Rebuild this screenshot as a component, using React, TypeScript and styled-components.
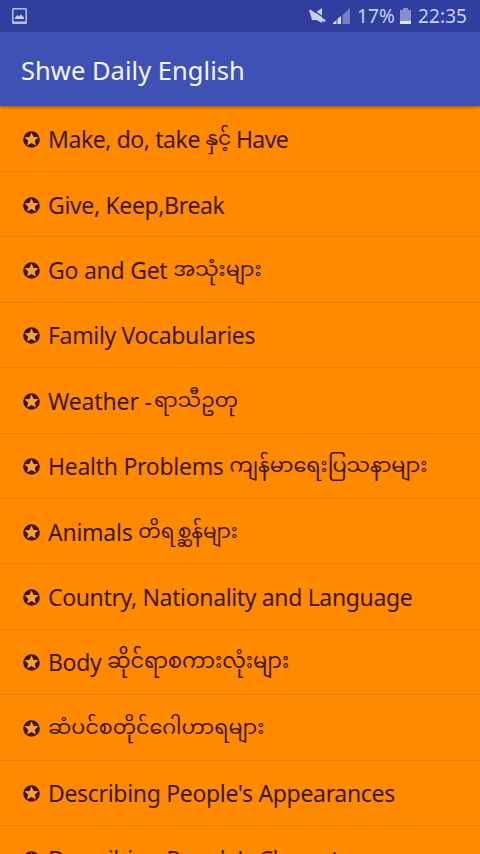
import styled, { createGlobalStyle } from 'styled-components';

const GlobalStyle = createGlobalStyle`
    * {
        box-sizing: border-box;
    }
    body {
        margin: 0;
        overflow: hidden;
        background: #ff8a00;
    }
`
const Screen = styled.main`
    width: 480px;
    height: 854px;
    overflow: hidden;
    display: flex;
    flex-direction: column;
    background: #ff8a00;
    font-family: "Noto Sans", "Open Sans", sans-serif;
`
const StatusBar = styled.div`
    flex: none;
    height: 32px;
    padding: 0 13px 0 12px;
    display: flex;
    align-items: center;
    background: #303f9f;
    color: #c9cff0;
`
const StatusIcons = styled.div`
    margin-left: auto;
    display: flex;
    align-items: center;
    gap: 7px;
`
const StatusText = styled.span<{ $width: number }>`
    width: ${(p) => p.$width}px;
    font-size: 19px;
    line-height: 32px;
    letter-spacing: 0.1px;
    white-space: nowrap;
`
const AppBar = styled.header`
    flex: none;
    position: relative;
    height: 74px;
    padding: 1px 21px 0;
    display: flex;
    align-items: center;
    background: #3f51b5;
    box-shadow: 0 1px 3px rgba(70, 30, 0, 0.55);
`
const Title = styled.h1`
    margin: 0;
    font-size: 25.5px;
    line-height: 34px;
    font-weight: 400;
    letter-spacing: 0.03px;
    color: #f3f5ff;
`
const List = styled.ul`
    flex: none;
    margin: 0;
    padding: 0.6px 0 0;
    list-style: none;
`
const Row = styled.li`
    height: 65.4px;
    padding: 1px 23px 0;
    display: flex;
    align-items: center;
    border-bottom: 1px solid #ea7f06;
    color: #3d1607;
`
const Star = styled.svg`
    flex: none;
    margin-top: 1px;
`
const Label = styled.div`
    margin-left: 8px;
    font-size: 23px;
    line-height: 32px;
    white-space: pre;
`
const Latin = styled.span<{ $spacing?: number }>`
    letter-spacing: ${(p) => p.$spacing ?? -0.35}px;
`
const Burmese = styled.span<{ $width: number; $size?: number }>`
    display: inline-block;
    width: ${(p) => p.$width}px;
    font-family: "Noto Sans Myanmar", "Padauk", "Noto Sans", sans-serif;
    font-size: ${(p) => p.$size ?? 20.7}px;
    line-height: 0;
    vertical-align: 3px;
`

type Part = { text: string; width?: number; size?: number; spacing?: number }

const topics: Part[][] = [
    [{ text: 'Make, do, take ', spacing: -0.42 }, { text: 'နှင့်', width: 25, size: 20 }, { text: ' Have', spacing: -0.6 }],
    [{ text: 'Give, Keep,Break' }],
    [{ text: 'Go and Get ', spacing: -0.25 }, { text: 'အသုံးများ', width: 88 }],
    [{ text: 'Family Vocabularies' }],
    [{ text: 'Weather ', spacing: -0.15 }, { text: '-', spacing: 2 }, { text: 'ရာသီဥတု', width: 84 }],
    [{ text: 'Health Problems ', spacing: -0.28 }, { text: 'ကျန်မာရေးပြသနာများ', width: 199, size: 20.8 }],
    [{ text: 'Animals ', spacing: -0.25 }, { text: 'တိရစ္ဆန်များ', width: 100, size: 20 }],
    [{ text: 'Country, Nationality and Language' }],
    [{ text: 'Body ' }, { text: 'ဆိုင်ရာစကားလုံးများ', width: 182, size: 20.9 }],
    [{ text: 'ဆံပင်စတိုင်ဂေါဟာရများ', width: 216 }],
    [{ text: "Describing People's Appearances", spacing: -0.32 }],
    [{ text: "Describing People's Characters", spacing: -0.32 }],
]

function StarBadge() {
    return (
        <Star width="17" height="17" viewBox="0 0 17 17">
            <circle cx="8.5" cy="8.5" r="8.3" fill="#3d1607" />
            <path d="M8.5 1.4 10.6 5.9 15.4 6.3 11.800 9.700 12.900 14.600 8.500 12 4.100 14.600 5.200 9.700 1.600 6.300 6.400 5.900Z" fill="#ffa030" />
        </Star>
    )
}

function PictureIcon() {
    return (
        <svg width="15" height="16" viewBox="0 0 15 16">
            <path d="M1.5 0h12A1.5 1.5 0 0 1 15 1.5v13a1.5 1.5 0 0 1-1.5 1.5h-12A1.5 1.5 0 0 1 0 14.5v-13A1.5 1.5 0 0 1 1.5 0zM1.5 1.5v12h12v-12z" fillRule="evenodd" fill="#b9c0ea" />
            <path d="M3 11V9.5L5.5 7 7 8.5 9 6.5 12 9.5V11z" fill="#c9cff0" />
        </svg>
    )
}

function MuteIcon() {
    return (
        <svg width="17" height="16" viewBox="0 0 17 16">
            <path d="M1 5h5L13 0v15L7.500 12H3z" fill="#c9cff0" />
            <path d="M1.500 0.500 17 11" stroke="#303f9f" strokeWidth="1.300" />
            <path d="M0.500 2.500 16 13.300" stroke="#c9cff0" strokeWidth="2.600" />
        </svg>
    )
}

function SignalIcon() {
    return (
        <svg width="17" height="16" viewBox="0 0 17 16">
            <path d="M9.5 16V7L17 0v16z" fill="#7680c4" />
            <path d="M0 16v-1l3.5-3v4zM4.5 16v-5L8 8v8z" fill="#d5daf5" />
        </svg>
    )
}

function BatteryIcon() {
    return (
        <svg width="11" height="16" viewBox="0 0 11 16">
            <path d="M3 0h5v2h3v14H0V2h3z" fill="#8790cb" />
            <path d="M0 13h11v3H0z" fill="#e3e6f9" />
        </svg>
    )
}

export default function App() {
    return (
        <Screen>
            <GlobalStyle />
            <StatusBar>
                <PictureIcon />
                <StatusIcons>
                    <MuteIcon />
                    <SignalIcon />
                    <StatusText $width={36}>17%</StatusText>
                    <BatteryIcon />
                    <StatusText $width={49}>22:35</StatusText>
                </StatusIcons>
            </StatusBar>
            <AppBar>
                <Title>Shwe Daily English</Title>
            </AppBar>
            <List>
                {topics.map((parts, i) => (
                    <Row key={i}>
                        <StarBadge />
                        <Label>
                            {parts.map((part, j) => part.width
                                ? <Burmese key={j} $width={part.width} $size={part.size}>{part.text}</Burmese>
                                : <Latin key={j} $spacing={part.spacing}>{part.text}</Latin>
                            )}
                        </Label>
                    </Row>
                ))}
            </List>
        </Screen>
    );
}
